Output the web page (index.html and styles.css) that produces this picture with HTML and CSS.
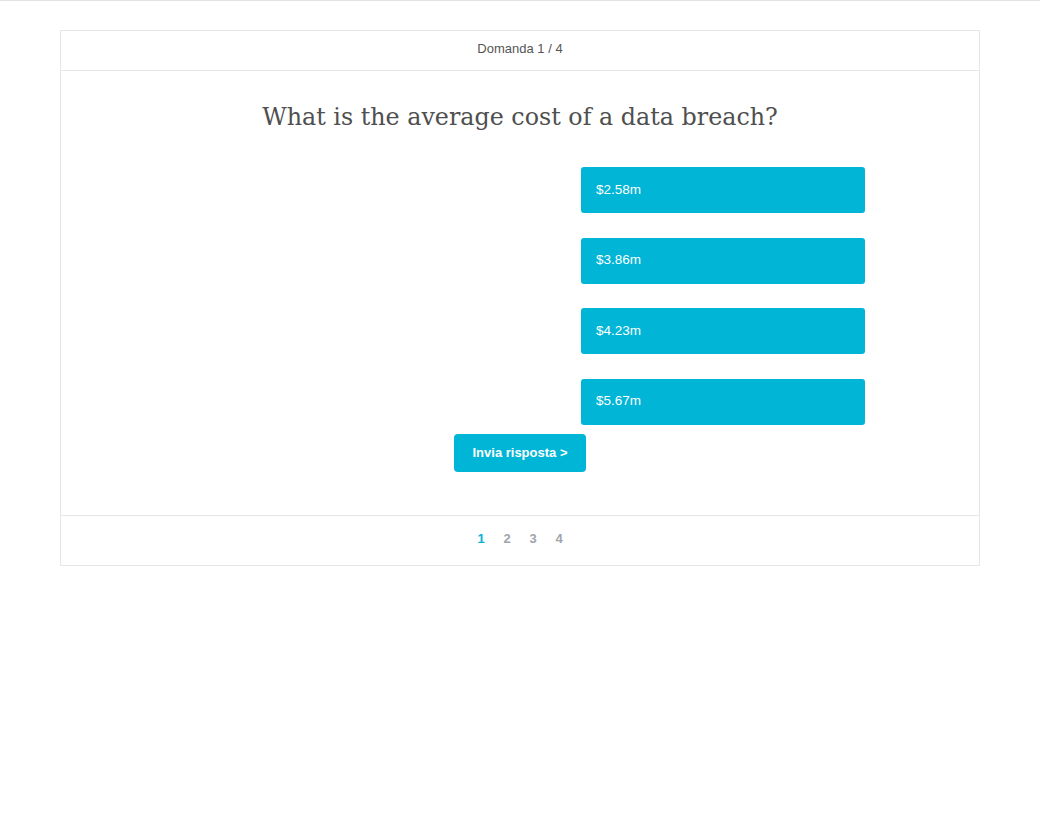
FILE: index.html
```html
<!DOCTYPE html>
<html lang="it">
<head>
<meta charset="utf-8">
<title>Quiz</title>
<link rel="stylesheet" href="styles.css">
</head>
<body>
<div class="page">
  <div class="quiz">
    <div class="quiz-header">Domanda 1 / 4</div>
    <div class="quiz-body">
      <h1 class="question">What is the average cost of a data breach?</h1>
      <div class="answers">
        <button class="answer">$2.58m</button>
        <button class="answer">$3.86m</button>
        <button class="answer">$4.23m</button>
        <button class="answer">$5.67m</button>
      </div>
      <div class="actions">
        <button class="submit">Invia risposta &gt;</button>
      </div>
    </div>
    <div class="quiz-footer">
      <span class="page-num active">1</span>
      <span class="page-num">2</span>
      <span class="page-num">3</span>
      <span class="page-num">4</span>
    </div>
  </div>
</div>
</body>
</html>
```

FILE: styles.css
```css
* { box-sizing: border-box; }
html, body { margin: 0; padding: 0; background: #fff; }
body {
  font-family: "Liberation Sans", Arial, sans-serif;
  border-top: 1px solid #e3e3e3;
}
.page {
  padding: 29px 60px 0 60px;
}
.quiz {
  border: 1px solid #e6e6e6;
  width: 920px;
}
.quiz-header {
  height: 40px;
  border-bottom: 1px solid #e6e6e6;
  display: flex;
  align-items: center;
  justify-content: center;
  font-size: 13px;
  color: #555;
  padding-bottom: 4px;
}
.quiz-body {
  height: 445px;
  border-bottom: 1px solid #e6e6e6;
  padding-top: 29px;
}
.question {
  margin: 0;
  text-align: center;
  font-family: "DejaVu Serif", Georgia, serif;
  font-weight: normal;
  font-size: 23.8px;
  line-height: 34px;
  color: #4f4f4f;
}
.answers {
  width: 690px;
  margin: 33px auto 0;
  display: flex;
  flex-direction: column;
  align-items: flex-end;
  gap: 24.5px;
}
.answer {
  width: 284px;
  height: 46px;
  border: none;
  border-radius: 3px;
  background: #00b5d6;
  color: #fff;
  font-family: "Liberation Sans", Arial, sans-serif;
  font-size: 13.5px;
  text-align: left;
  padding: 0 15px 2px;
  cursor: pointer;
}
.actions {
  display: flex;
  justify-content: center;
  margin-top: 9px;
}
.submit {
  width: 132px;
  height: 38px;
  border: none;
  border-radius: 4px;
  background: #00b5d6;
  color: #fff;
  font-family: "Liberation Sans", Arial, sans-serif;
  font-weight: bold;
  font-size: 13px;
  cursor: pointer;
}
.quiz-footer {
  height: 49px;
  display: flex;
  align-items: center;
  justify-content: center;
  gap: 16px;
  padding-bottom: 4px;
}
.page-num {
  font-size: 13px;
  font-weight: bold;
  color: #a0a4ab;
  width: 10px;
  text-align: center;
}
.page-num.active { color: #00b5d6; }
```
